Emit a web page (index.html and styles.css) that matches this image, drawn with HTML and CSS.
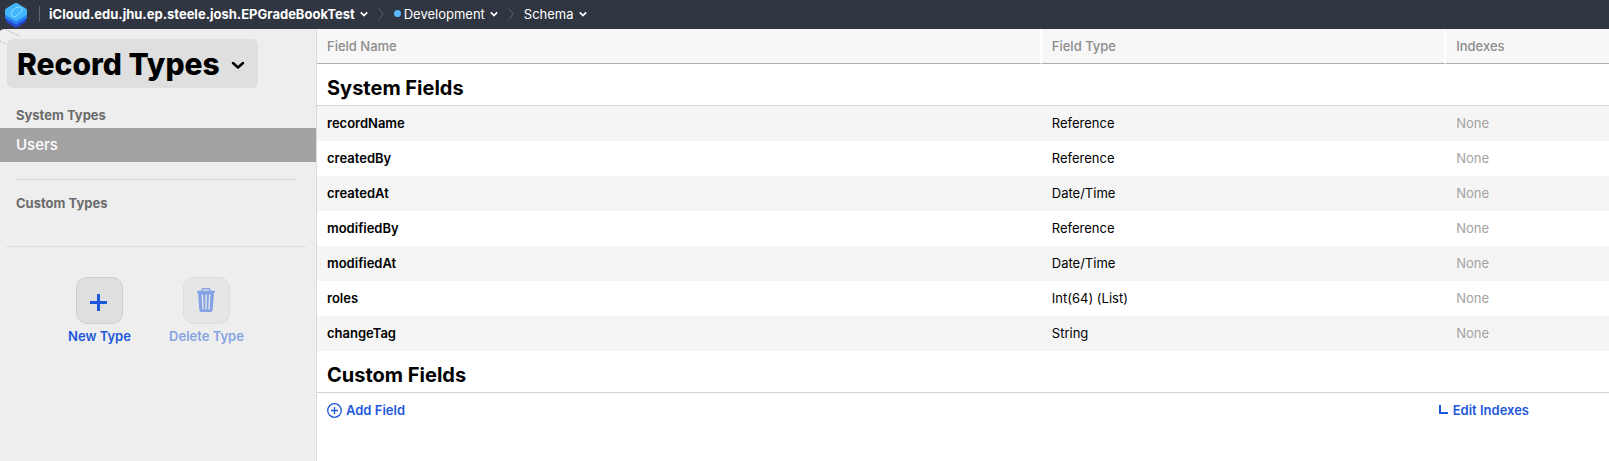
FILE: index.html
```html
<!DOCTYPE html>
<html lang="en">
<head>
<meta charset="utf-8">
<title>CloudKit Schema</title>
<link rel="stylesheet" href="styles.css">
</head>
<body>
<header class="topbar">
  <svg class="logo" width="24" height="26" viewBox="0 0 24 26" aria-hidden="true">
    <path fill="#2447d0" d="M12 10 22 14.500v4.500q0 1-1 1.600L13.300 25.200q-1.300.7-2.600 0L3 20.600q-1-.6-1-1.600v-4.500z"/>
    <path fill="#2b7ff0" d="M12 5 23 10.500v5q0 1-1 1.600l-8.700 5q-1.300.7-2.600 0L2 17.100q-1-.6-1-1.600v-5z"/>
    <path fill="#42b5fb" d="M10.700 1.300q1.300-.7 2.600 0L22 6.400q1 .6 1 1.600v4q0 1-1 1.600l-8.700 5q-1.300.7-2.600 0L2 13.600q-1-.6-1-1.600V8q0-1 1-1.600z"/>
    <path fill="none" stroke="#8fe0ff" d="M8.500 14.500q-2-1.500-1-4Q8 7.500 11.500 6q3-1.500 5-.8 2.500.8 1.500 3.200-.8 2-3 3.300-1 .6-2.500 2.200-2 2-4 .6z"/>
  </svg>
  <nav class="crumbs" aria-label="Breadcrumb">
    <button class="crumb crumb-main" type="button">iCloud.edu.jhu.ep.steele.josh.EPGradeBookTest<svg class="chev" width="8" height="6" viewBox="0 0 8 6"><path d="M.8 1.300 4 4.500 7.200 1.300"/></svg></button>
    <svg class="sep" width="6" height="12" viewBox="0 0 6 12"><path d="M1 .5 5 6 1 11.500"/></svg>
    <button class="crumb" type="button"><span class="dot"></span>Development<svg class="chev" width="8" height="6" viewBox="0 0 8 6"><path d="M.8 1.300 4 4.500 7.200 1.300"/></svg></button>
    <svg class="sep" width="6" height="12" viewBox="0 0 6 12"><path d="M1 .5 5 6 1 11.500"/></svg>
    <button class="crumb" type="button">Schema<svg class="chev" width="8" height="6" viewBox="0 0 8 6"><path d="M.8 1.300 4 4.500 7.200 1.300"/></svg></button>
  </nav>
</header>
<div class="layout">
  <aside class="sidebar">
    <svg class="corner" width="24" height="18" viewBox="0 0 24 18" aria-hidden="true">
      <path fill="#2f3541" d="M0 0h5Q1 0 0 2z"/>
      <path fill="none" stroke="#999" stroke-dasharray="1 1.300" d="M6 .5 20 7.500M0 12l6 3"/>
    </svg>
    <button class="title" type="button">Record Types<svg width="14" height="9" viewBox="0 0 14 9"><path d="M2 2 7 6.500 12 2"/></svg></button>
    <h2 class="group">System Types</h2>
    <a class="item" href="#users">Users</a>
    <hr class="rule">
    <h2 class="group group-custom">Custom Types</h2>
    <hr class="rule rule-wide">
    <div class="actions">
      <button class="action" type="button">
        <span class="tile"><svg width="17" height="17" viewBox="0 0 17 17"><path fill="none" stroke="#1d58dc" stroke-width="3" d="M8.500 0v17M0 8.500h17"/></svg></span>
        New Type
      </button>
      <button class="action" type="button" disabled>
        <span class="tile tile-trash"><svg width="18" height="24" viewBox="0 0 18 24"><path fill="none" stroke="#1d58dc" stroke-width="1.500" d="M5 3V2q0-1.200 1.200-1.200h5.600Q13 .8 13 2v1"/><path fill="#1d58dc" d="M0 2.700h18v1.800h-1L15.700 22q-.2 2-2 2H4.300q-1.800 0-2-2L1 4.500H0z"/><path stroke="#e8e8e8" stroke-width="1.300" d="M5.300 6.500 6 21.500M9 6.500v15M12.700 6.500 12 21.500"/></svg></span>
        Delete Type
      </button>
    </div>
  </aside>
  <main class="main">
    <table class="fields">
      <colgroup><col class="col-name"><col class="col-type"><col></colgroup>
      <thead><tr><th scope="col">Field Name</th><th scope="col">Field Type</th><th scope="col">Indexes</th></tr></thead>
      <tbody>
        <tr class="section"><th colspan="3">System Fields</th></tr>
        <tr class="odd"><th scope="row">recordName</th><td>Reference</td><td class="none">None</td></tr>
        <tr><th scope="row">createdBy</th><td>Reference</td><td class="none">None</td></tr>
        <tr class="odd"><th scope="row">createdAt</th><td>Date/Time</td><td class="none">None</td></tr>
        <tr><th scope="row">modifiedBy</th><td>Reference</td><td class="none">None</td></tr>
        <tr class="odd"><th scope="row">modifiedAt</th><td>Date/Time</td><td class="none">None</td></tr>
        <tr><th scope="row">roles</th><td>Int(64) (List)</td><td class="none">None</td></tr>
        <tr class="odd"><th scope="row">changeTag</th><td>String</td><td class="none">None</td></tr>
      </tbody>
      <tbody>
        <tr class="section"><th colspan="3">Custom Fields</th></tr>
      </tbody>
    </table>
    <div class="footer">
      <button class="link" type="button"><svg width="15" height="15" viewBox="0 0 15 15"><path fill="none" stroke="#1d58dc" stroke-width="1.300" d="M7.500 4v7M4 7.500h7M14.300 7.500a6.800 6.800 0 1 1-13.600 0 6.800 6.800 0 0 1 13.600 0z"/></svg>Add Field</button>
      <button class="link" type="button"><svg width="10" height="10" viewBox="0 0 10 10"><path fill="none" stroke="#1d58dc" stroke-width="2" d="M1 0v8h8"/></svg>Edit Indexes</button>
    </div>
  </main>
</div>
</body>
</html>
```
FILE: styles.css
```css
* { box-sizing: border-box; }
body {
  margin: 0;
  min-height: 100vh;
  display: flex;
  flex-direction: column;
  background: #fff;
  color: #000;
  font: 13px/16px Inter, "Liberation Sans", sans-serif;
}
button {
  margin: 0;
  padding: 0;
  border: 0;
  background: none;
  color: inherit;
  font: inherit;
}
.topbar {
  display: flex;
  align-items: center;
  height: 29px;
  padding: 0 4px 2px;
  background: #2f3541;
  color: #fff;
}
.logo { margin-top: 2px; }
.crumbs {
  display: flex;
  align-items: center;
  gap: 10px;
  margin-left: 11px;
  padding-left: 9px;
  border-left: 1px solid #5f6571;
}
.crumb {
  display: flex;
  align-items: center;
  gap: 5px;
  white-space: nowrap;
}
.crumb-main { font-weight: 700; }
.chev path { fill: none; stroke: #fff; stroke-width: 1.7; }
.sep path { fill: none; stroke: #5a606c; }
.dot {
  width: 7px;
  height: 7px;
  margin-right: -2px;
  border-radius: 50%;
  background: #59b8ff;
}
.layout { flex: 1; display: flex; }
.sidebar {
  position: relative;
  flex: none;
  width: 317px;
  padding-top: 10px;
  border-right: 1px solid #dadada;
  background: #eee;
}
.corner { position: absolute; top: 0; left: 0; }
.title {
  position: relative;
  display: flex;
  align-items: center;
  gap: 11px;
  height: 49px;
  margin-left: 7px;
  padding: 0 13px 0 10px;
  border-radius: 6px;
  background: #dfdfdf;
  font-size: 30px;
  font-weight: 800;
  line-height: 38px;
}
.title svg { margin-top: 4px; }
.title path {
  fill: none;
  stroke: #000;
  stroke-width: 2.5;
  stroke-linecap: round;
  stroke-linejoin: round;
}
.group {
  margin: 19px 16px 5px;
  color: #6b6b6b;
  font-size: 13px;
  font-weight: 700;
}
.item {
  display: block;
  height: 34px;
  padding-left: 16px;
  background: #a3a3a3;
  color: #fff;
  font-size: 15px;
  font-weight: 500;
  line-height: 33px;
  text-decoration: none;
}
.rule {
  margin: 17px 20px 0 16px;
  border: 0;
  border-top: 1px solid #d5d5d5;
}
.group-custom { margin: 15px 16px 35px; }
.rule-wide { margin: 0 10px 0 6px; border-color: #dcdcdc; }
.actions {
  display: flex;
  justify-content: center;
  margin-top: 30px;
  padding-right: 10px;
}
.action {
  display: flex;
  flex-direction: column;
  align-items: center;
  gap: 4px;
  width: 107px;
  color: #1d58dc;
  font-weight: 600;
}
.action:disabled { opacity: .5; }
.tile {
  display: flex;
  align-items: center;
  justify-content: center;
  width: 47px;
  height: 47px;
  padding: 4px 2px 0 0;
  border: 1px solid #cecece;
  border-radius: 11px;
  background: #dfdfdf;
}
.tile-trash { padding: 0 1px 1px 0; }
.main { flex: 1; min-width: 0; }
.fields {
  width: 100%;
  border-collapse: separate;
  border-spacing: 0;
  table-layout: fixed;
}
.col-name { width: 56.1%; }
.col-type { width: 31.3%; }
.fields th, .fields td {
  height: 35px;
  padding: 0 10px 2px;
  text-align: left;
  font-weight: 400;
}
.fields thead th {
  padding-bottom: 1px;
  border-bottom: 1px solid #b0b0b0;
  background: #f7f7f7;
  color: #8c8c8c;
  font-weight: 500;
}
.fields thead th:not(:last-child) { border-right: 2px solid #fff; }
.fields tbody th { font-weight: 600; }
.fields .odd { background: #f5f5f5; }
.fields .none { color: #a3a3a3; }
.fields .section th {
  height: 42px;
  padding-top: 6px;
  padding-bottom: 0;
  border-bottom: 1px solid #d4d4d4;
  font-size: 20px;
  font-weight: 700;
  line-height: 24px;
}
.footer {
  display: flex;
  justify-content: space-between;
  padding: 9px 80px 0 10px;
}
.link {
  display: flex;
  align-items: center;
  gap: 4px;
  color: #1d58dc;
  font-weight: 600;
}
```
